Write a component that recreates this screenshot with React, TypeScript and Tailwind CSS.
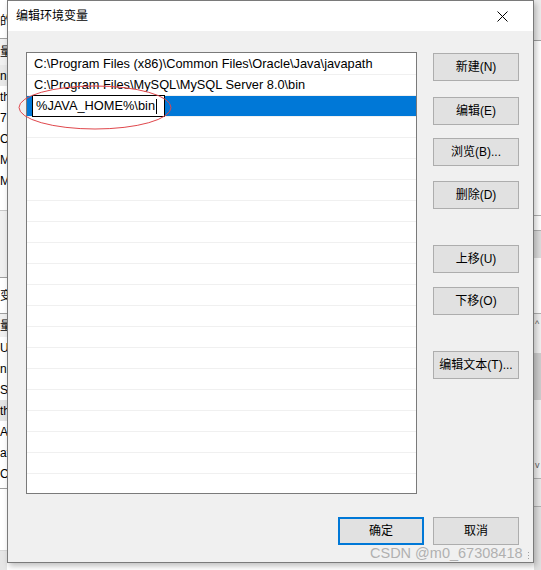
import React from 'react';

const paths = [
  'C:\\Program Files (x86)\\Common Files\\Oracle\\Java\\javapath',
  'C:\\Program Files\\MySQL\\MySQL Server 8.0\\bin',
];

const sideButtons = [
  { label: '新建(N)', mt: 'mt-[1px]' },
  { label: '编辑(E)', mt: 'mt-[16px]' },
  { label: '浏览(B)...', mt: 'mt-[13px]' },
  { label: '删除(D)', mt: 'mt-[15px]' },
  { label: '上移(U)', mt: 'mt-[36px]' },
  { label: '下移(O)', mt: 'mt-[14px]' },
  { label: '编辑文本(T)...', mt: 'mt-[36px]' },
];

function WinButton({ label, primary, className = '' }: { label: string; primary?: boolean; className?: string }) {
  return (
    <button
      className={
        'w-[86px] h-[28px] shrink-0 bg-[#e1e1e1] text-[12px] text-black flex items-center justify-center ' +
        (primary ? 'border-2 border-[#0078d7] ' : 'border border-[#adadad] ') +
        className
      }
    >
      {label}
    </button>
  );
}

function LeftStrip() {
  const top = ['ne', 'th', '76', 'C', 'M', 'MI'];
  const bottom = ['U', 'nl', 'S', 'th', 'AT', 'at', 'C'];
  return (
    <div className="w-[7px] shrink-0 overflow-hidden flex flex-col text-[12px] text-black whitespace-nowrap">
      <div className="h-[38px] bg-white pt-[12px]">的</div>
      <div className="h-[1px] bg-[#a0a0a0]" />
      <div className="h-[26px] bg-[#f0f0f0] flex items-center">量</div>
      {top.map((t, i) => (
        <div key={i} className={'h-[21px] flex items-center ' + (i === 0 ? 'bg-[#e8e8e8]' : 'bg-white')}>{t}</div>
      ))}
      <div className="h-[19px] bg-white" />
      <div className="h-[1px] bg-[#c8c8c8]" />
      <div className="h-[66px] bg-[#f0f0f0]" />
      <div className="h-[1px] bg-[#a0a0a0]" />
      <div className="h-[35px] bg-white flex items-center">变</div>
      <div className="h-[1px] bg-[#a0a0a0]" />
      <div className="h-[23px] bg-[#f0f0f0] flex items-center">量</div>
      {bottom.map((t, i) => (
        <div key={i} className={'h-[21px] flex items-center ' + (i === 3 ? 'bg-[#e5e5e5]' : 'bg-white')}>{t}</div>
      ))}
      <div className="h-[4px] bg-white" />
      <div className="h-[1px] bg-[#a0a0a0]" />
      <div className="h-[61px] bg-white" />
      <div className="h-[1px] bg-[#d8d8d8]" />
      <div className="flex-1 bg-[#e6e6e6]" />
    </div>
  );
}

function RightStrip() {
  return (
    <div className="flex-1 flex flex-col overflow-hidden">
      <div className="h-[40px] bg-[#ececec]" />
      <div className="h-[1px] bg-[#a0a0a0]" />
      <div className="h-[174px] bg-white" />
      <div className="h-[1px] bg-[#b0b0b0]" />
      <div className="h-[14px] bg-white" />
      <div className="h-[1px] bg-[#b0b0b0]" />
      <div className="h-[27px] bg-[#dcdcdc]" />
      <div className="h-[55px] bg-white" />
      <div className="h-[1px] bg-[#b0b0b0]" />
      <div className="h-[39px] bg-[#f0f0f0] text-[9px] leading-[20px] text-[#606060] pl-[1px]">^</div>
      <div className="h-[47px] bg-[#cdcdcd]" />
      <div className="h-[72px] bg-[#f0f0f0] flex items-end text-[9px] text-[#606060] pl-[1px]">v</div>
      <div className="h-[6px] bg-[#f0f0f0]" />
      <div className="h-[1px] bg-[#b0b0b0]" />
      <div className="h-[27px] bg-[#e8e8e8]" />
      <div className="h-[1px] bg-[#b0b0b0]" />
      <div className="flex-1 bg-[#e0e0e0]" />
    </div>
  );
}

export default function App() {
  const rowCount = 21;
  return (
    <div className="relative w-[541px] h-[570px] overflow-hidden flex bg-white font-['Liberation_Sans','Noto_Sans_CJK_SC',sans-serif]">
      <LeftStrip />

      <div className="w-[527px] h-[563px] shrink-0 border border-[#7a7a7a] flex flex-col shadow-[2px_3px_6px_rgba(0,0,0,0.25)] z-10">
        <div className="h-[30px] bg-white flex items-center justify-between pl-[8px] pr-[25px]">
          <span className="text-[12px] text-black">编辑环境变量</span>
          <svg width="11" height="11" viewBox="0 0 11 11">
            <path d="M0.5 0.5 L10.5 10.5 M10.5 0.5 L0.5 10.5" stroke="#000" strokeWidth="1" />
          </svg>
        </div>

        <div className="relative flex-1 bg-[#f0f0f0] flex flex-col pl-[18px] pr-[14px]">
          <div className="flex items-start pt-[21px]">
            <div className="w-[391px] h-[442px] border border-[#7a7a7a] bg-white overflow-hidden flex flex-col text-[12.8px] text-black">
              {Array.from({ length: rowCount }).map((_, i) => {
                const text = paths[i];
                if (i === 2) {
                  return (
                    <div key={i} className="h-[21px] shrink-0 bg-[#0078d7] border-b border-[#f0f0f0] pl-[5px] flex">
                      <div className="w-[133px] h-[22px] bg-white border border-black flex items-center pl-[3px] -mt-[1px]">
                        <span>%JAVA_HOME%\bin</span>
                        <span className="w-[1px] h-[15px] bg-black ml-[1px]" />
                      </div>
                    </div>
                  );
                }
                return (
                  <div
                    key={i}
                    className={'shrink-0 border-b border-[#f0f0f0] flex items-center pl-[7px] whitespace-nowrap ' + (i === 0 ? 'h-[22px]' : 'h-[21px]')}
                  >
                    {text}
                  </div>
                );
              })}
            </div>

            <div className="ml-[16px] flex flex-col">
              {sideButtons.map((b) => (
                <WinButton key={b.label} label={b.label} className={b.mt} />
              ))}
            </div>
          </div>

          <div className="flex justify-end gap-[9px] mt-[23px]">
            <WinButton label="确定" primary />
            <WinButton label="取消" />
          </div>

          <svg className="absolute left-[9px] top-[54px]" width="156" height="46" viewBox="0 0 156 46">
            <ellipse cx="78" cy="22.5" rx="76" ry="21.5" fill="none" stroke="#e0474c" strokeWidth="1" />
          </svg>
        </div>
      </div>

      <RightStrip />

      <div className="absolute left-[370px] top-[544px] z-20 text-[14.5px] leading-[18px] text-[#b0b0b0] whitespace-nowrap font-['Liberation_Sans',sans-serif]">
        CSDN @m0_67308418
      </div>
      <div className="absolute left-[528px] top-[552px] z-20 flex flex-col gap-[2px]">
        <span className="w-[1px] h-[1px] bg-[#a0a0a0]" />
        <span className="w-[1px] h-[1px] bg-[#a0a0a0]" />
        <span className="w-[1px] h-[1px] bg-[#a0a0a0]" />
      </div>
    </div>
  );
}
